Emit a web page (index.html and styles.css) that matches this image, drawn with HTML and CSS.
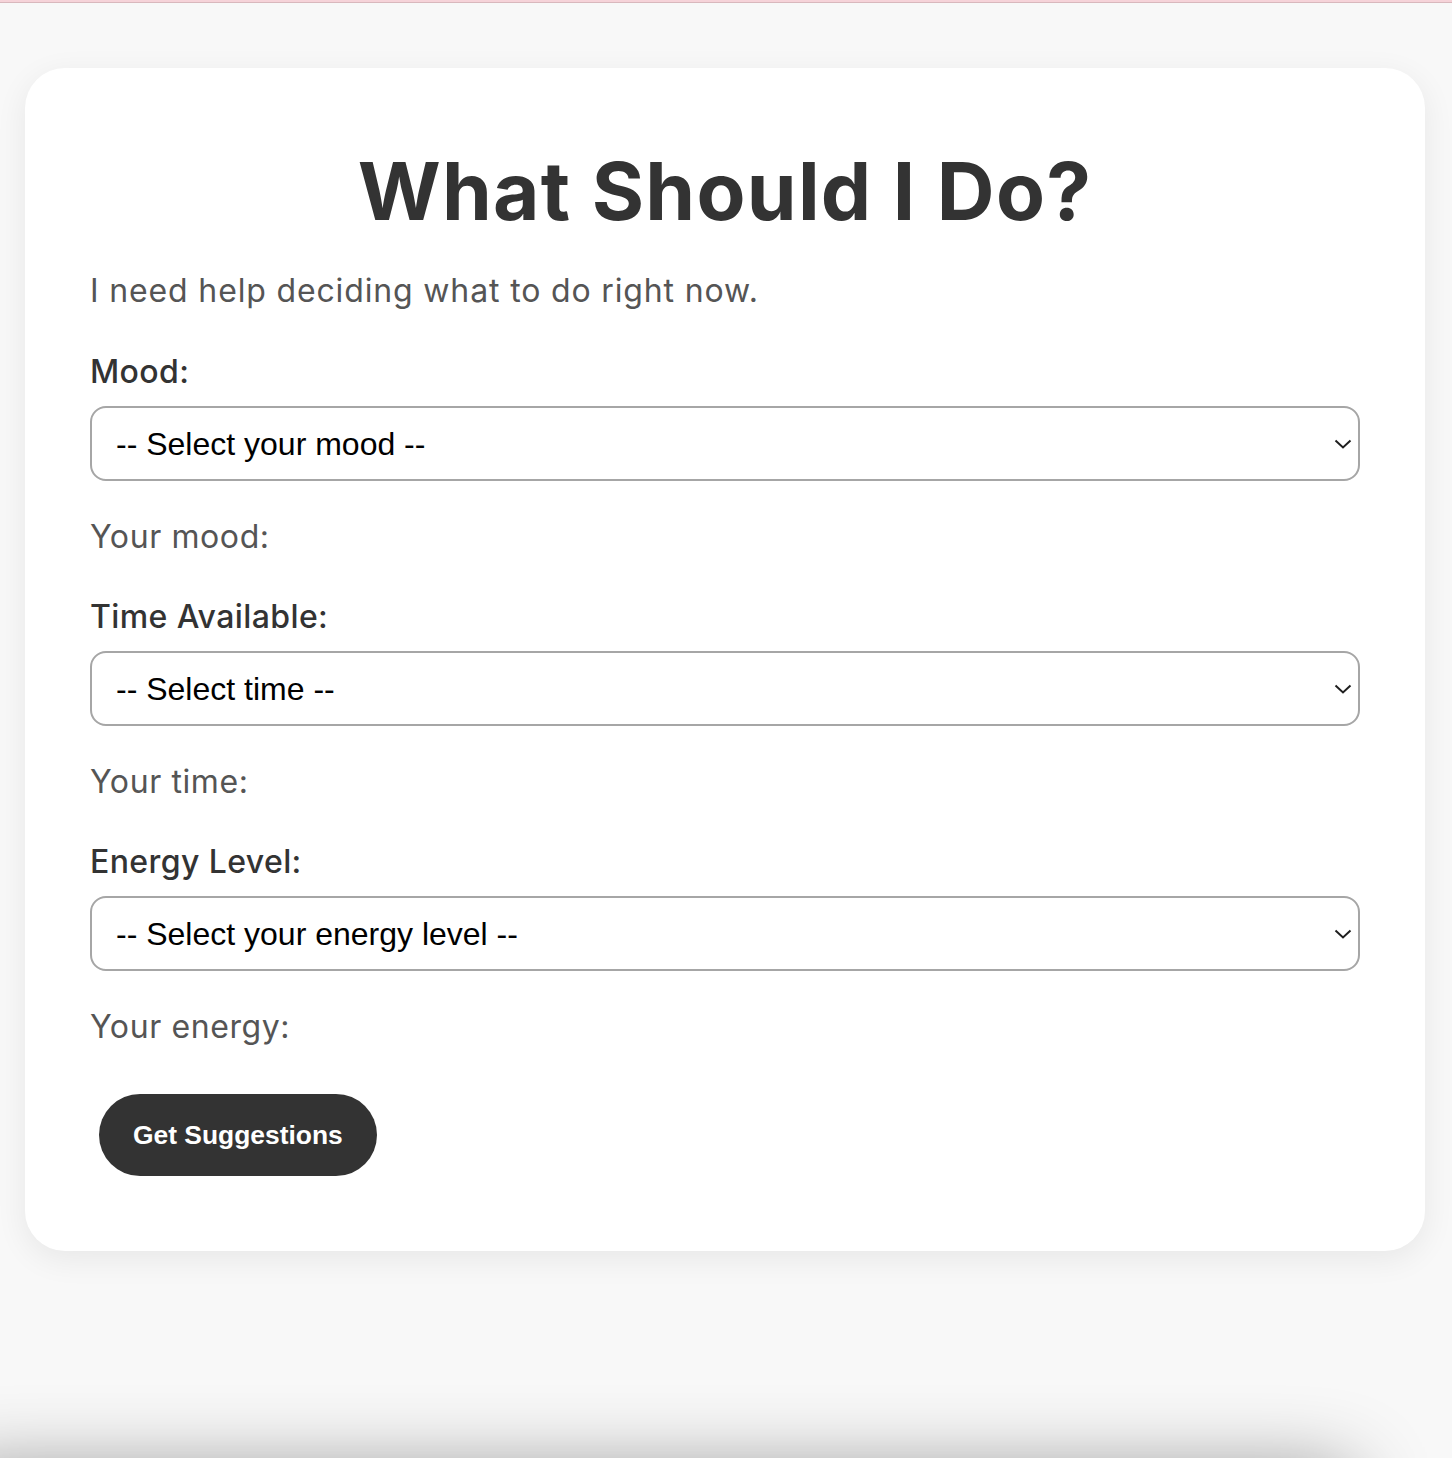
FILE: index.html
```html
<!DOCTYPE html>
<html lang="en">
<head>
<meta charset="utf-8">
<title>What Should I Do?</title>
<link rel="stylesheet" href="styles.css">
</head>
<body>
<main class="card">
  <h1 class="title">What Should I Do?</h1>
  <p class="intro">I need help deciding what to do right now.</p>

  <div class="field">
    <label class="label" for="mood">Mood:</label>
    <div class="select-wrap">
      <select id="mood" class="select">
        <option>-- Select your mood --</option>
      </select>
      <svg class="chevron" width="18" height="10" viewBox="0 0 18 10"><path d="M1.5 1.5 L9 8.5 L16.5 1.5" fill="none" stroke="#1f1f1f" stroke-width="2"/></svg>
    </div>
    <p class="output">Your mood:</p>
  </div>

  <div class="field">
    <label class="label" for="time">Time Available:</label>
    <div class="select-wrap">
      <select id="time" class="select">
        <option>-- Select time --</option>
      </select>
      <svg class="chevron" width="18" height="10" viewBox="0 0 18 10"><path d="M1.5 1.5 L9 8.5 L16.5 1.5" fill="none" stroke="#1f1f1f" stroke-width="2"/></svg>
    </div>
    <p class="output">Your time:</p>
  </div>

  <div class="field">
    <label class="label" for="energy">Energy Level:</label>
    <div class="select-wrap">
      <select id="energy" class="select">
        <option>-- Select your energy level --</option>
      </select>
      <svg class="chevron" width="18" height="10" viewBox="0 0 18 10"><path d="M1.5 1.5 L9 8.5 L16.5 1.5" fill="none" stroke="#1f1f1f" stroke-width="2"/></svg>
    </div>
    <p class="output">Your energy:</p>
  </div>

  <button class="btn" type="button">Get Suggestions</button>
</main>
<div class="results-shadow"></div>
</body>
</html>
```

FILE: styles.css
```css
html, body {
  overflow: hidden;
}
body {
  margin: 0;
  background: #f8f8f8;
  border-top: 2px solid #f6d3d9;
  box-shadow: inset 0 1px 0 #d9b8bd;
  font-family: Inter, "Open Sans", sans-serif;
  color: #333;
}
.card {
  box-sizing: border-box;
  width: 1400px;
  margin: 66px 0 0 25px;
  padding: 75px 65px 75px;
  background: #fff;
  border-radius: 40px;
  box-shadow: 0 8px 32px rgba(0, 0, 0, 0.07);
}
.title {
  margin: 0 0 28px;
  font-size: 80px;
  line-height: 96px;
  font-weight: 700;
  letter-spacing: 1.3px;
  text-align: center;
  color: #333;
}
.intro {
  margin: 0 0 33px;
  font-size: 32px;
  line-height: 48px;
  font-weight: 400;
  letter-spacing: 0.85px;
  color: #555;
}
.field {
  margin-bottom: 32px;
}
.label {
  display: block;
  font-size: 32px;
  line-height: 48px;
  font-weight: 500;
  letter-spacing: 0.4px;
  color: #333;
}
.select-wrap {
  position: relative;
  margin-top: 10px;
}
.select {
  display: block;
  box-sizing: border-box;
  width: 100%;
  height: 75px;
  margin: 0;
  padding: 0 24px;
  border: 2px solid #a6a6a6;
  border-radius: 16px;
  background: #fff;
  font-family: "Liberation Sans", Arial, sans-serif;
  font-size: 32px;
  color: #000;
  appearance: none;
  -webkit-appearance: none;
}
.chevron {
  position: absolute;
  right: 8px;
  top: 33px;
}
.output {
  margin: 32px 0 0;
  font-size: 32px;
  line-height: 48px;
  font-weight: 400;
  letter-spacing: 0.6px;
  color: #555;
}
.field:last-of-type {
  margin-bottom: 43px;
}
.btn {
  display: block;
  height: 82px;
  margin-left: 9px;
  padding: 0 34px;
  border: 0;
  border-radius: 41px;
  background: #333;
  color: #fff;
  font-family: "Liberation Sans", Arial, sans-serif;
  font-weight: 700;
  font-size: 26.4px;
}
.results-shadow {
  width: 1400px;
  height: 200px;
  margin: 222px 0 0 -50px;
  background: #f8f8f8;
  box-shadow: 0 0 80px rgba(0, 0, 0, 0.45);
}
```
